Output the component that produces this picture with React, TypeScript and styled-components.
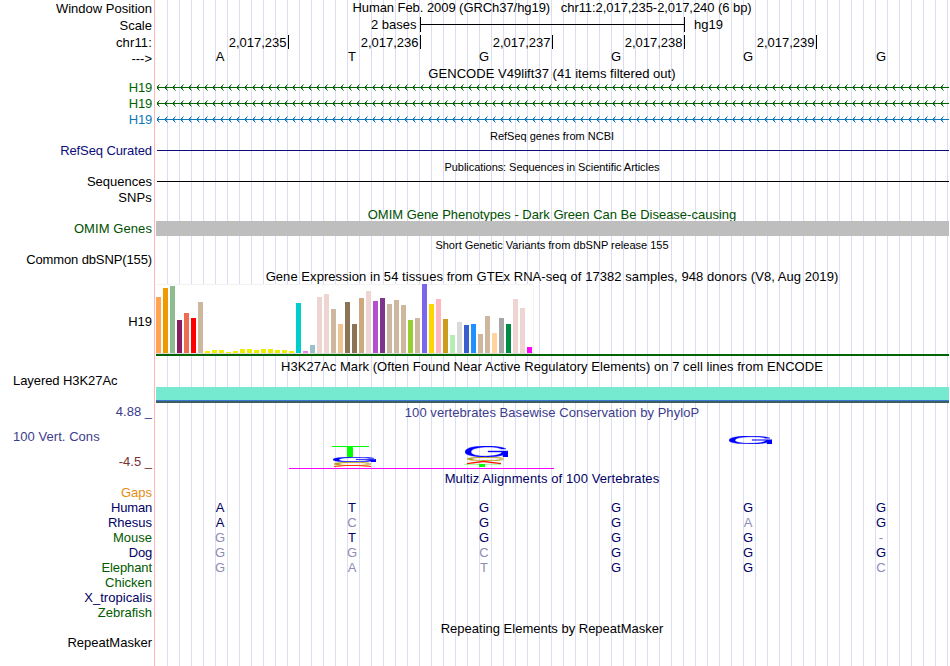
import React from 'react'
import styled, { createGlobalStyle } from 'styled-components'

// -------------------------------------------------------- //
//                           Data                           //
// -------------------------------------------------------- //

interface Label {
  text: string,
  height: number,
  color?: string,
  indent?: number,
  spacing?: number
}

const navy = '#000064'
const forest = '#005a00'
const cons = '#3c3c8c'

// height is the distance down to the next label
const labels: Label[] = [
  { text: 'Window Position', height: 17 },
  { text: 'Scale', height: 17 },
  { text: 'chr11:', height: 16, spacing: 0.15 },
  { text: '--->', height: 29 },
  { text: 'H19', height: 16, color: '#006400', spacing: -0.2 },
  { text: 'H19', height: 16, color: '#006400', spacing: -0.2 },
  { text: 'H19', height: 31, color: '#0c78b8', spacing: -0.2 },
  { text: 'RefSeq Curated', height: 31, color: '#0c0c78', spacing: -0.1 },
  { text: 'Sequences', height: 16 },
  { text: 'SNPs', height: 31, spacing: 0.15 },
  { text: 'OMIM Genes', height: 31, color: '#005000', spacing: 0.08 },
  { text: 'Common dbSNP(155)', height: 62, spacing: -0.12 },
  { text: 'H19', height: 59 },
  { text: 'Layered H3K27Ac', height: 31, indent: 13, spacing: -0.07 },
  { text: '4.88 _', height: 25, color: cons },
  { text: '100 Vert. Cons', height: 25, color: cons, indent: 13, spacing: 0.05 },
  { text: '-4.5 _', height: 31, color: '#783232' },
  { text: 'Gaps', height: 15, color: '#e68c14' },
  { text: 'Human', height: 15, color: navy, spacing: -0.2 },
  { text: 'Rhesus', height: 15, color: navy },
  { text: 'Mouse', height: 15, color: forest },
  { text: 'Dog', height: 15, color: navy, spacing: -0.2 },
  { text: 'Elephant', height: 15, color: forest, spacing: -0.1 },
  { text: 'Chicken', height: 15, color: forest },
  { text: 'X_tropicalis', height: 15, color: navy, spacing: 0.05 },
  { text: 'Zebrafish', height: 30, color: forest },
  { text: 'RepeatMasker', height: 31 }
]

const positions = ['2,017,235', '2,017,236', '2,017,237', '2,017,238', '2,017,239']

const tan = '#cdb79e'
const yellow = '#eeee00'
const rose = '#eed5d2'

// [bar height, color] for each GTEx tissue
const tissues: [number, string][] = [
  [56, '#ffa54f'], [65, '#ee9a00'], [67, '#8fbc8f'], [33, '#8b1c62'],
  [40, '#ee6a50'], [35, '#ff0000'], [51, tan],
  [2, yellow], [3, yellow], [3, yellow], [1, yellow], [2, yellow], [4, yellow], [4, yellow],
  [3, yellow], [4, yellow], [4, yellow], [3, yellow], [3, yellow], [2, yellow],
  [50, '#00cdcd'], [2, '#ee82ee'], [8, '#9ac0cd'], [56, rose], [59, rose],
  [44, tan], [29, '#eec591'], [51, '#8b7355'], [29, '#8b7355'], [55, '#cdaa7d'],
  [62, rose], [52, '#b452cd'], [55, '#7a378b'], [49, tan], [53, tan], [48, tan],
  [33, '#9acd32'], [35, tan], [69, '#7a67ee'], [49, '#ffd700'], [54, '#ffb6c1'],
  [34, '#cd9b1d'], [18, '#b4eeb4'], [31, '#d9d9d9'], [28, '#3a5fcd'], [29, '#1e90ff'],
  [19, tan], [37, tan], [20, '#ffd39b'], [35, '#a6a6a6'], [29, '#008b45'],
  [54, rose], [45, rose], [6, '#ff00ff']
]

// lower case marks a base that differs from human
const alignments = ['ATGGGG', 'AcGGaG', 'gTGGG-', 'ggcGGG', 'gatGGc']

// -------------------------------------------------------- //
//                       Main Component                     //
// -------------------------------------------------------- //

export default function App() {
  return (
    <>
      <GlobalStyle />
      <Browser>
        <LabelColumn>
          {labels.map((l, i) => (
            <LabelRow key={i} $height={l.height} $color={l.color} $indent={l.indent} $spacing={l.spacing}>
              {l.text}
            </LabelRow>
          ))}
        </LabelColumn>
        <Tracks>
          <Title $height={17} $spacing={-0.06}>Human Feb. 2009 (GRCh37/hg19) &nbsp; chr11:2,017,235-2,017,240 (6 bp)</Title>
          <Scale>
            <ScaleName>2 bases</ScaleName>
            <ScaleBar />
            <ScaleName>hg19</ScaleName>
          </Scale>
          <Ruler>
            {positions.map(p => <Tick key={p}>{p}</Tick>)}
          </Ruler>
          <Bases sequence='ATGGGG' color='#000' height={17} />
          <Title $height={14} $spacing={0.04}>GENCODE V49lift37 (41 items filtered out)</Title>
          <GeneLine color='#006400' />
          <GeneLine color='#006400' />
          <GeneLine color='#0c78b8' />
          <Title $small $height={21} $top={1}>RefSeq genes from NCBI</Title>
          <Line $color='#0c0c78' />
          <Title $small $height={21} $top={9} $spacing={-0.06}>Publications: Sequences in Scientific Articles</Title>
          <Line $color='#000' />
          <Title $color='#005000' $height={14} $top={25}>OMIM Gene Phenotypes - Dark Green Can Be Disease-causing</Title>
          <OmimBand />
          <Title $small $height={31} $top={2}>Short Genetic Variants from dbSNP release 155</Title>
          <Title $height={15} $spacing={0.06}>Gene Expression in 54 tissues from GTEx RNA-seq of 17382 samples, 948 donors (V8, Aug 2019)</Title>
          <ExpressionChart />
          <GeneModel />
          <Title $height={28} $top={3} $spacing={0.05}>H3K27Ac Mark (Often Found Near Active Regulatory Elements) on 7 cell lines from ENCODE</Title>
          <Histone />
          <Title $color={cons} $height={25} $top={2} $spacing={0.05}>100 vertebrates Basewise Conservation by PhyloP</Title>
          <Conservation />
          <Title $color={navy} $height={29} $spacing={0.1}>Multiz Alignments of 100 Vertebrates</Title>
          {alignments.map((a, i) => <Bases key={i} sequence={a} color={navy} height={15} />)}
          <Title $height={45} $top={46}>Repeating Elements by RepeatMasker</Title>
        </Tracks>
      </Browser>
    </>
  )
}

// -------------------------------------------------------- //
//                        Sub-Components                    //
// -------------------------------------------------------- //

interface BasesProps {
  sequence: string,
  color: string,
  height: number
}

const Bases = ({ sequence, color, height }: BasesProps) => (
  <BaseRow $height={height}>
    {sequence.split('').map((b, i) => (
      <Base key={i} $color={b === b.toUpperCase() && b !== '-' ? color : '#8c8cb4'}>{b.toUpperCase()}</Base>
    ))}
  </BaseRow>
)

const GeneLine = ({ color }: { color: string }) => (
  <GeneSvg width='793' height='16' shapeRendering='crispEdges'>
    <rect x='1' y='7' width='792' height='1' fill={color} />
    {Array.from({ length: 99 }, (_, i) => (
      <g key={i} transform={`translate(${i * 8} 0)`} fill={color}>
        <path d='M1 6h1v1h-1zM2 5h1v1h-1zM1 8h1v1h-1zM2 9h1v1h-1z' />
        <path d='M2 6h1v1h-1zM3 4h1v1h-1zM2 8h1v1h-1zM3 10h1v1h-1z' opacity='0.55' />
      </g>
    ))}
  </GeneSvg>
)

const ExpressionChart = () => (
  <Chart>
    {tissues.map(([height, color], i) => (
      <Bar key={i} style={{ height, background: color }} />
    ))}
  </Chart>
)

// Base logos are stretched to the size of their score, stacked from the top
const Conservation = () => (
  <ConsSvg width='793' height='41'>
    <path d='M176 16h37v1h-16v10h-6v-10h-15z' fill='#0f0' />
    <LogoG x={177} y={27} width={43} height={5} />
    <LogoC x={177} y={32} width={39} height={4} />
    <path d='M178 36.5L190 35.5H202L215 36.5' fill='none' stroke='#f31' />
    <LogoG x={309} y={16} width={43} height={11} />
    <LogoC x={310} y={27} width={39} height={4} />
    <path d='M311 33.6L327 31.5H328L345 33.6' fill='none' stroke='#f10' strokeWidth='1.3' />
    <path d='M308 34.3h37' stroke='#0f0' strokeWidth='0.4' />
    <rect x='323' y='34' width='6' height='3' fill='#0f0' />
    <LogoG x={573} y={6} width={43} height={8} />
    <path d='M133 38.5h265' stroke='#f0f' shapeRendering='crispEdges' />
  </ConsSvg>
)

interface LogoProps {
  x: number,
  y: number,
  width: number,
  height: number
}

const LogoG = ({ x, y, width, height }: LogoProps) => (
  <svg x={x} y={y} width={width} height={height} viewBox='0 0 43 11' preserveAspectRatio='none'>
    <path
      d='M41 3C35-1 0-2 0 6C0 12 30 12 38 9V11H43V5H23V6H37C36 11 6 12 6 6C6 0 32 0 36 3Z'
      fill='#00f'
      stroke='#00f'
      strokeWidth='0.4'
      vectorEffect='non-scaling-stroke'
    />
  </svg>
)

const LogoC = ({ x, y, width, height }: LogoProps) => (
  <svg x={x} y={y} width={width} height={height} viewBox='0 0 39 4' preserveAspectRatio='none'>
    <path
      d='M38 1.3C32-.4 1-.4 1 2C1 4.4 32 4.4 38 2.7L34 2.5C28 3.6 6 3.6 6 2C6 .4 28 .4 34 1.5Z'
      fill='#b4a01e'
      stroke='#b4a01e'
      strokeWidth='0.3'
    />
  </svg>
)

// -------------------------------------------------------- //
//                           Styles                         //
// -------------------------------------------------------- //

const GlobalStyle = createGlobalStyle`
  body {
    margin: 0;
    background: #fff;
    color: #000;
    font: 13px/15px "Liberation Sans", Arial, sans-serif;
  }
`

const Browser = styled.div`
  display: flex;
  width: 949px;
  height: 666px;
  overflow: hidden;
  white-space: nowrap;
`

const LabelColumn = styled.div`
  width: 154px;
  padding-top: 1px;
  box-sizing: border-box;
`

interface LabelRowProps {
  $height: number,
  $color?: string,
  $indent?: number,
  $spacing?: number
}

const LabelRow = styled.div<LabelRowProps>`
  height: ${props => props.$height}px;
  color: ${props => props.$color || '#000'};
  padding-left: ${props => props.$indent || 0}px;
  padding-right: 2px;
  letter-spacing: ${props => props.$spacing || 0}px;
  text-align: ${props => props.$indent ? 'left' : 'right'};
`

const Tracks = styled.div`
  width: 793px;
  padding-left: 1px;
  border-left: 1px solid #ffb4b4;
  background: linear-gradient(to right, transparent 11px, #dcdcf5 11px) content-box 0 0 / 12px 100%;
`

interface TitleProps {
  $height: number,
  $top?: number,
  $color?: string,
  $small?: boolean,
  $spacing?: number
}

const Title = styled.div<TitleProps>`
  height: ${props => props.$height}px;
  padding-top: ${props => props.$top || 0}px;
  padding-right: 1px;
  font-size: ${props => props.$small ? 11 : 13}px;
  color: ${props => props.$color || '#000'};
  letter-spacing: ${props => props.$spacing || 0}px;
  text-align: center;
`

const Scale = styled.div`
  display: flex;
  height: 18px;
  padding-left: 215px;
`

const ScaleName = styled.div`
  width: 49px;
`

const ScaleBar = styled.div`
  width: 263px;
  height: 15px;
  margin-right: 9px;
  border: solid #000;
  border-width: 0 1px;
  background: linear-gradient(#000, #000) 0 7px / 100% 1px no-repeat;
`

const Ruler = styled.div`
  display: flex;
  height: 14px;
  padding-left: 1px;
`

const Tick = styled.div`
  width: 132px;
  height: 14px;
  box-sizing: border-box;
  padding-right: 1.5px;
  border-right: 1px solid #000;
  text-align: right;
`

const BaseRow = styled.div<{ $height: number }>`
  display: grid;
  grid-template-columns: repeat(5, 132px) 134px;
  height: ${props => props.$height}px;
  margin-left: -2px;
`

const Base = styled.div<{ $color: string }>`
  color: ${props => props.$color};
  text-align: center;
`

const GeneSvg = styled.svg`
  display: block;
`

const Line = styled.div<{ $color: string }>`
  height: 1px;
  margin-left: 1px;
  background: ${props => props.$color};
`

// relative, so that the band covers the descenders of the title above
const OmimBand = styled.div`
  position: relative;
  height: 15px;
  background: #bebebe;
`

const Chart = styled.div`
  display: flex;
  align-items: flex-end;
  gap: 2px;
  width: 378px;
  height: 70px;
  box-sizing: border-box;
  border-bottom: 1px solid #dcdcdc;
  background: #fff;
  box-shadow: inset -1px 1px #f3f3f3;
`

const Bar = styled.div`
  width: 5px;
`

const GeneModel = styled.div`
  height: 2px;
  background: #006400;
`

const Histone = styled.div`
  height: 14px;
  border-bottom: 2px solid #3c5f64;
  background: linear-gradient(#76ead0 13px, #3a78d0 13px);
`

const ConsSvg = styled.svg`
  display: block;
`
